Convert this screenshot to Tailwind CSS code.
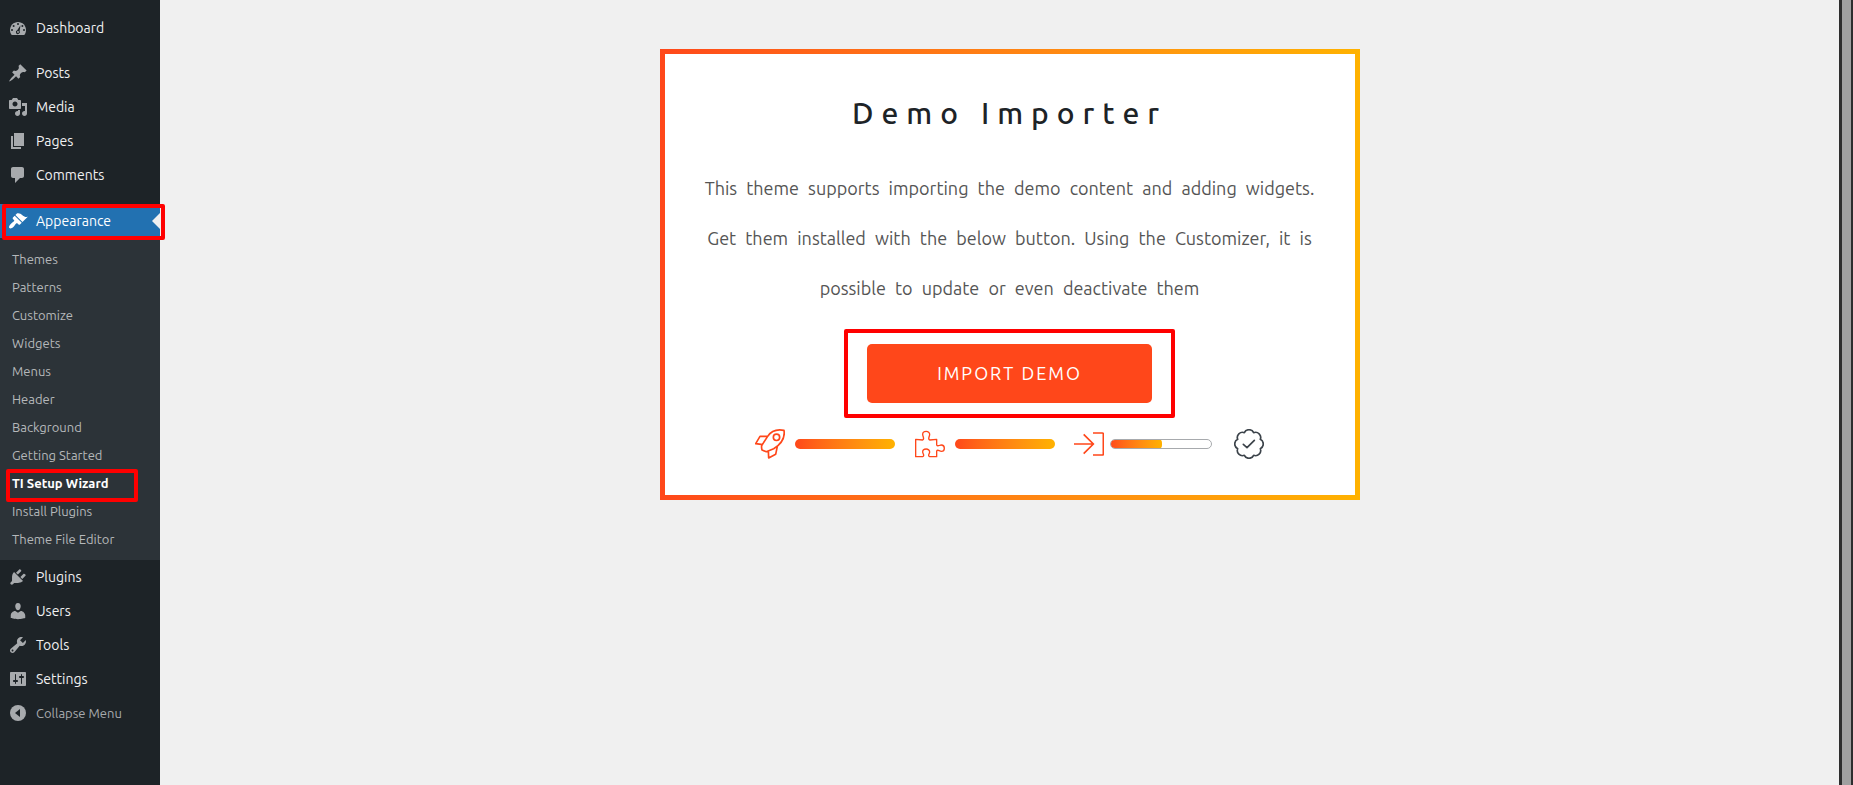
<!DOCTYPE html>
<html lang="en">
<head>
<meta charset="utf-8">
<title>TI Setup Wizard</title>
<script src="https://cdn.jsdelivr.net/npm/@tailwindcss/browser@4"></script>
</head>
<body class="flex min-h-screen bg-[#f0f0f0] font-[Ubuntu,'Noto_Sans',sans-serif]">
<nav aria-label="Admin menu" class="w-40 shrink-0 bg-[#1d2327] pt-[11px] text-sm text-[#f0f0f1]">
  <ul>
    <li><a href="#" class="flex h-[34px] items-center gap-2 pl-2"><svg class="size-5 fill-[#a7aaad]" viewBox="0 0 20 20"><path d="M3.76 17h12.48C17.34 15.63 18 13.89 18 12c0-4.42-3.58-8-8-8s-8 3.58-8 8c0 1.89.66 3.63 1.76 5z"/><g fill="#1d2327"><circle cx="10" cy="6" r="1"/><circle cx="5.6" cy="8" r="1"/><circle cx="14.4" cy="8" r="1"/><circle cx="4" cy="12" r="1"/><circle cx="16" cy="12" r="1"/><path d="M12.5 7.3 11.6 13a2 2 0 1 1-2.4-.8z"/></g><circle cx="10" cy="14" r=".9"/></svg>Dashboard</a></li>
    <li class="mt-[11px]"><a href="#" class="flex h-[34px] items-center gap-2 pl-2"><svg class="size-5 fill-[#a7aaad]" viewBox="0 0 20 20"><path d="M10.44 3.02l1.82-1.82 6.36 6.35-1.83 1.82c-1.05-.68-2.48-.57-3.41.36l-.75.75c-.92.93-1.04 2.35-.35 3.41l-1.83 1.82-2.41-2.41-2.8 2.79c-.42.42-3.38 2.71-3.8 2.29s1.86-3.39 2.28-3.81l2.79-2.79L4.1 9.36l1.83-1.82c1.05.69 2.48.57 3.4-.36l.75-.75c.93-.92 1.05-2.35.36-3.41z"/></svg>Posts</a></li>
    <li><a href="#" class="flex h-[34px] items-center gap-2 pl-2"><svg class="size-5 fill-[#a7aaad]" viewBox="0 0 20 20"><path d="M13 11V4c0-.55-.45-1-1-1h-1.67L9 1H5L3.67 3H2c-.55 0-1 .45-1 1v7c0 .55.45 1 1 1h10c.55 0 1-.45 1-1zM7 4.5c1.38 0 2.5 1.12 2.5 2.5S8.38 9.5 7 9.5 4.5 8.38 4.5 7 5.62 4.5 7 4.5zM14 6h5v10.5c0 1.38-1.12 2.5-2.5 2.5S14 17.88 14 16.5s1.12-2.5 2.5-2.5c.17 0 .34.02.5.05V9h-3V6zm-4 8.05V13h2v3.5c0 1.38-1.12 2.5-2.5 2.5S7 17.88 7 16.5 8.12 14 9.5 14c.17 0 .34.02.5.05z"/></svg>Media</a></li>
    <li><a href="#" class="flex h-[34px] items-center gap-2 pl-2"><svg class="size-5 fill-[#a7aaad]" viewBox="0 0 20 20"><path d="M6 15V2h10v13H6zm-1 1h8v2H3V5h2v11z"/></svg>Pages</a></li>
    <li><a href="#" class="flex h-[34px] items-center gap-2 pl-2"><svg class="size-5 fill-[#a7aaad]" viewBox="0 0 20 20"><path d="M5 2h9c1.1 0 2 .9 2 2v7c0 1.1-.9 2-2 2h-2l-5 5v-5H5c-1.1 0-2-.9-2-2V4c0-1.1.9-2 2-2z"/></svg>Comments</a></li>
    <li class="mt-3">
      <a href="#" class="relative flex h-[34px] items-center gap-2 bg-[#2271b1] pl-2 text-white"><svg class="size-5 fill-white" viewBox="0 0 20 20"><path d="M14.48 11.06L7.41 3.99l1.5-1.5c.5-.56 2.3-.47 3.51.32 1.21.8 1.43 1.28 2.91 2.1 1.18.64 2.45 1.26 4.45.85zm-.71.71L6.7 4.7 4.93 6.47c-.39.39-.39 1.02 0 1.41l1.06 1.06c.39.39.39 1.03 0 1.42-.6.6-1.43 1.11-2.21 1.69-.35.26-.7.53-1.01.84C1.43 14.23.4 16.08 1.4 17.07c.99 1 2.84-.03 4.18-1.36.31-.31.58-.66.85-1.02.57-.78 1.08-1.61 1.69-2.21.39-.39 1.02-.39 1.41 0l1.06 1.06c.39.39 1.02.39 1.41 0z"/></svg>Appearance
        <svg class="absolute right-0 h-4 w-2 fill-[#f0f0f0]" viewBox="0 0 8 16"><path d="M8 0v16L0 8z"/></svg>
        <span class="absolute -right-[5px] left-[2px] top-0 h-9 rounded-xs border-4 border-[#ff0000]"></span>
      </a>
      <ul class="bg-[#2c3338] py-[7px] text-[13px] text-[#b5b8ba]">
        <li><a href="#" class="flex h-7 items-center pl-3">Themes</a></li>
        <li><a href="#" class="flex h-7 items-center pl-3">Patterns</a></li>
        <li><a href="#" class="flex h-7 items-center pl-3">Customize</a></li>
        <li><a href="#" class="flex h-7 items-center pl-3">Widgets</a></li>
        <li><a href="#" class="flex h-7 items-center pl-3">Menus</a></li>
        <li><a href="#" class="flex h-7 items-center pl-3">Header</a></li>
        <li><a href="#" class="flex h-7 items-center pl-3">Background</a></li>
        <li><a href="#" class="flex h-7 items-center pl-3">Getting Started</a></li>
        <li><a href="#" aria-current="page" class="relative flex h-7 items-center pl-3 font-bold text-white">TI Setup Wizard<span class="absolute top-0 left-1.5 h-[33px] w-[132px] rounded-xs border-4 border-[#ff0000]"></span></a></li>
        <li><a href="#" class="flex h-7 items-center pl-3">Install Plugins</a></li>
        <li><a href="#" class="flex h-7 items-center pl-3">Theme File Editor</a></li>
      </ul>
    </li>
    <li><a href="#" class="flex h-[34px] items-center gap-2 pl-2"><svg class="size-5 fill-[#a7aaad]" viewBox="0 0 20 20"><path d="M13.11 4.36L9.87 7.6 8 5.73l3.24-3.24c.35-.34 1.05-.2 1.56.32.52.51.66 1.21.31 1.55zm-8 1.77l.91-1.12 9.01 9.01-1.19.84c-.71.71-2.63 1.16-3.82 1.16H6.14L4.9 17.26c-.59.59-1.54.59-2.12 0-.59-.58-.59-1.53 0-2.12l1.24-1.24v-3.88c0-1.13.4-3.19 1.09-3.89zm7.26 3.97l3.24-3.24c.34-.35 1.04-.21 1.55.31.52.51.66 1.21.31 1.55l-3.24 3.25z"/></svg>Plugins</a></li>
    <li><a href="#" class="flex h-[34px] items-center gap-2 pl-2"><svg class="size-5 fill-[#a7aaad]" viewBox="0 0 20 20"><path d="M10 9.25c-2.27 0-2.73-3.44-2.73-3.44C7 4.02 7.82 2 9.97 2c2.16 0 2.98 2.02 2.71 3.81 0 0-.41 3.44-2.68 3.44zm0 2.57L12.72 10c2.39 0 4.52 2.33 4.52 4.53v2.49s-3.65 1.13-7.24 1.13c-3.65 0-7.24-1.13-7.24-1.13v-2.49c0-2.25 1.94-4.48 4.47-4.48z"/></svg>Users</a></li>
    <li><a href="#" class="flex h-[34px] items-center gap-2 pl-2"><svg class="size-5 fill-[#a7aaad]" viewBox="0 0 20 20"><path d="M16.68 9.77c-1.34 1.34-3.3 1.67-4.95.99l-5.41 6.52c-.99.99-2.59.99-3.58 0s-.99-2.59 0-3.57l6.52-5.42c-.68-1.65-.35-3.61.99-4.95 1.28-1.28 3.12-1.62 4.72-1.06l-2.89 2.89 2.82 2.82 2.86-2.87c.53 1.58.18 3.39-1.08 4.65zM3.81 16.21c.4.39 1.04.39 1.43 0 .4-.4.4-1.04 0-1.43-.39-.4-1.03-.4-1.43 0-.39.39-.39 1.03 0 1.43z"/></svg>Tools</a></li>
    <li><a href="#" class="flex h-[34px] items-center gap-2 pl-2"><svg class="size-5 fill-[#a7aaad]" viewBox="0 0 20 20"><path d="M18 16V4c0-.55-.45-1-1-1H3c-.55 0-1 .45-1 1v12c0 .55.45 1 1 1h14c.55 0 1-.45 1-1zM8 11h1c.55 0 1 .45 1 1s-.45 1-1 1H8v1.5c0 .28-.22.5-.5.5s-.5-.22-.5-.5V13H6c-.55 0-1-.45-1-1s.45-1 1-1h1V5.5c0-.28.22-.5.5-.5s.5.22.5.5V11zm5-2h-1c-.55 0-1-.45-1-1s.45-1 1-1h1V5.5c0-.28.22-.5.5-.5s.5.22.5.5V7h1c.55 0 1 .45 1 1s-.45 1-1 1h-1v5.5c0 .28-.22.5-.5.5s-.5-.22-.5-.5V9z"/></svg>Settings</a></li>
    <li><button type="button" class="flex h-[34px] w-full items-center gap-2 pl-2 text-[13px] text-[#a7aaad]"><svg class="size-5 fill-[#a7aaad]" viewBox="0 0 20 20"><circle cx="10" cy="10" r="8"/><path fill="#1d2327" d="M12 6v8l-5-4z"/></svg>Collapse Menu</button></li>
  </ul>
</nav>
<main class="flex-1 pl-5 pt-[49px]">
  <section class="mx-auto w-full max-w-[700px] bg-linear-to-r from-[#ff471a] to-[#ffb200] p-[5px]">
    <div class="flex flex-col items-center bg-white px-8 pb-9 pt-[39px] text-center">
      <h1 class="text-[30px] leading-10 font-medium tracking-[8px] text-[#1d2327]">Demo Importer</h1>
      <p class="mt-[30px] text-[18px] leading-[50px] [word-spacing:5px] text-[#555555]">This theme supports importing the demo content and adding widgets. Get them installed with the below button. Using the Customizer, it is possible to update or even deactivate them</p>
      <div class="mt-4 rounded-xs border-4 border-[#ff0000] px-[19px] py-[11px]">
        <button type="button" class="h-[59px] w-[285px] rounded-[5px] bg-[#ff471a] text-[18px] tracking-[2px] text-white uppercase">Import Demo</button>
      </div>
      <div class="mt-[11px] flex items-center">
        <svg class="mr-2.5 size-[30px]" viewBox="0 0 90 90" fill="none" stroke="#ff471a" stroke-width="5" stroke-linejoin="round"><path d="M87 4C66 0 49 5 38 22L20 50q-1 6 1 13l13 5 22-9C77 46 91 29 87 4zM38 22H15L2 44l22 3M40 66l1 21 21-11 5-24"/><circle cx="64.500" cy="25" r="9.500"/></svg>
        <div class="h-2.5 w-[100px] rounded-full bg-linear-to-r from-[#ff471a] to-[#ffb200]"></div>
        <svg class="ml-5 mr-2.5 size-[30px]" viewBox="0 0 90 90" fill="none" stroke="#ff471a" stroke-width="4" stroke-linejoin="round"><path d="M2 31l21 2c7-3 0-10 0-17a10.500 9 0 0 1 21 0c0 7-7 14 0 17l21-2v17c3 6 8 0 14 0a9 9.500 0 0 1 0 19c-6 0-11-7-14-1v17H44c-7-3 0-9 0-14a10.500 9 0 0 0-21 0c0 5 7 11 0 14H2z"/></svg>
        <div class="h-2.5 w-[100px] rounded-full bg-linear-to-r from-[#ff471a] to-[#ffb200]"></div>
        <svg class="ml-[19px] mr-1.5 size-[30px]" viewBox="0 0 90 90" fill="none" stroke="#ff471a" stroke-width="5"><path d="M0 45h60M29 16l29 29-29 29M57 12h28q3 0 3 3v60q0 3-3 3H57"/></svg>
        <div class="h-2.5 w-[102px] overflow-hidden rounded-full border border-[#a7aaad]"><div class="-m-px h-2.5 w-[52px] rounded-r bg-linear-to-r from-[#ff471a] to-[#ffb200]"></div></div>
        <svg class="ml-[22px] size-[30px]" viewBox="0 0 90 90" fill="none" stroke="#3c434a" stroke-width="5" stroke-linejoin="round" stroke-linecap="round"><path d="M31 11a15.500 15.500 0 0 1 28 0a15.500 15.500 0 0 1 20 20a15.500 15.500 0 0 1 0 28a15.500 15.500 0 0 1-20 20a15.500 15.500 0 0 1-28 0a15.500 15.500 0 0 1-20-20a15.500 15.500 0 0 1 0-28a15.500 15.500 0 0 1 20-20zM28 46l11 10 22-22"/></svg>
      </div>
    </div>
  </section>
</main>
<div class="flex w-3.5 shrink-0 bg-[#2d2d2d] pl-[3px] pr-0.5" aria-hidden="true"><div class="flex-1 bg-[#a0a0a0]"></div></div>
</body>
</html>
